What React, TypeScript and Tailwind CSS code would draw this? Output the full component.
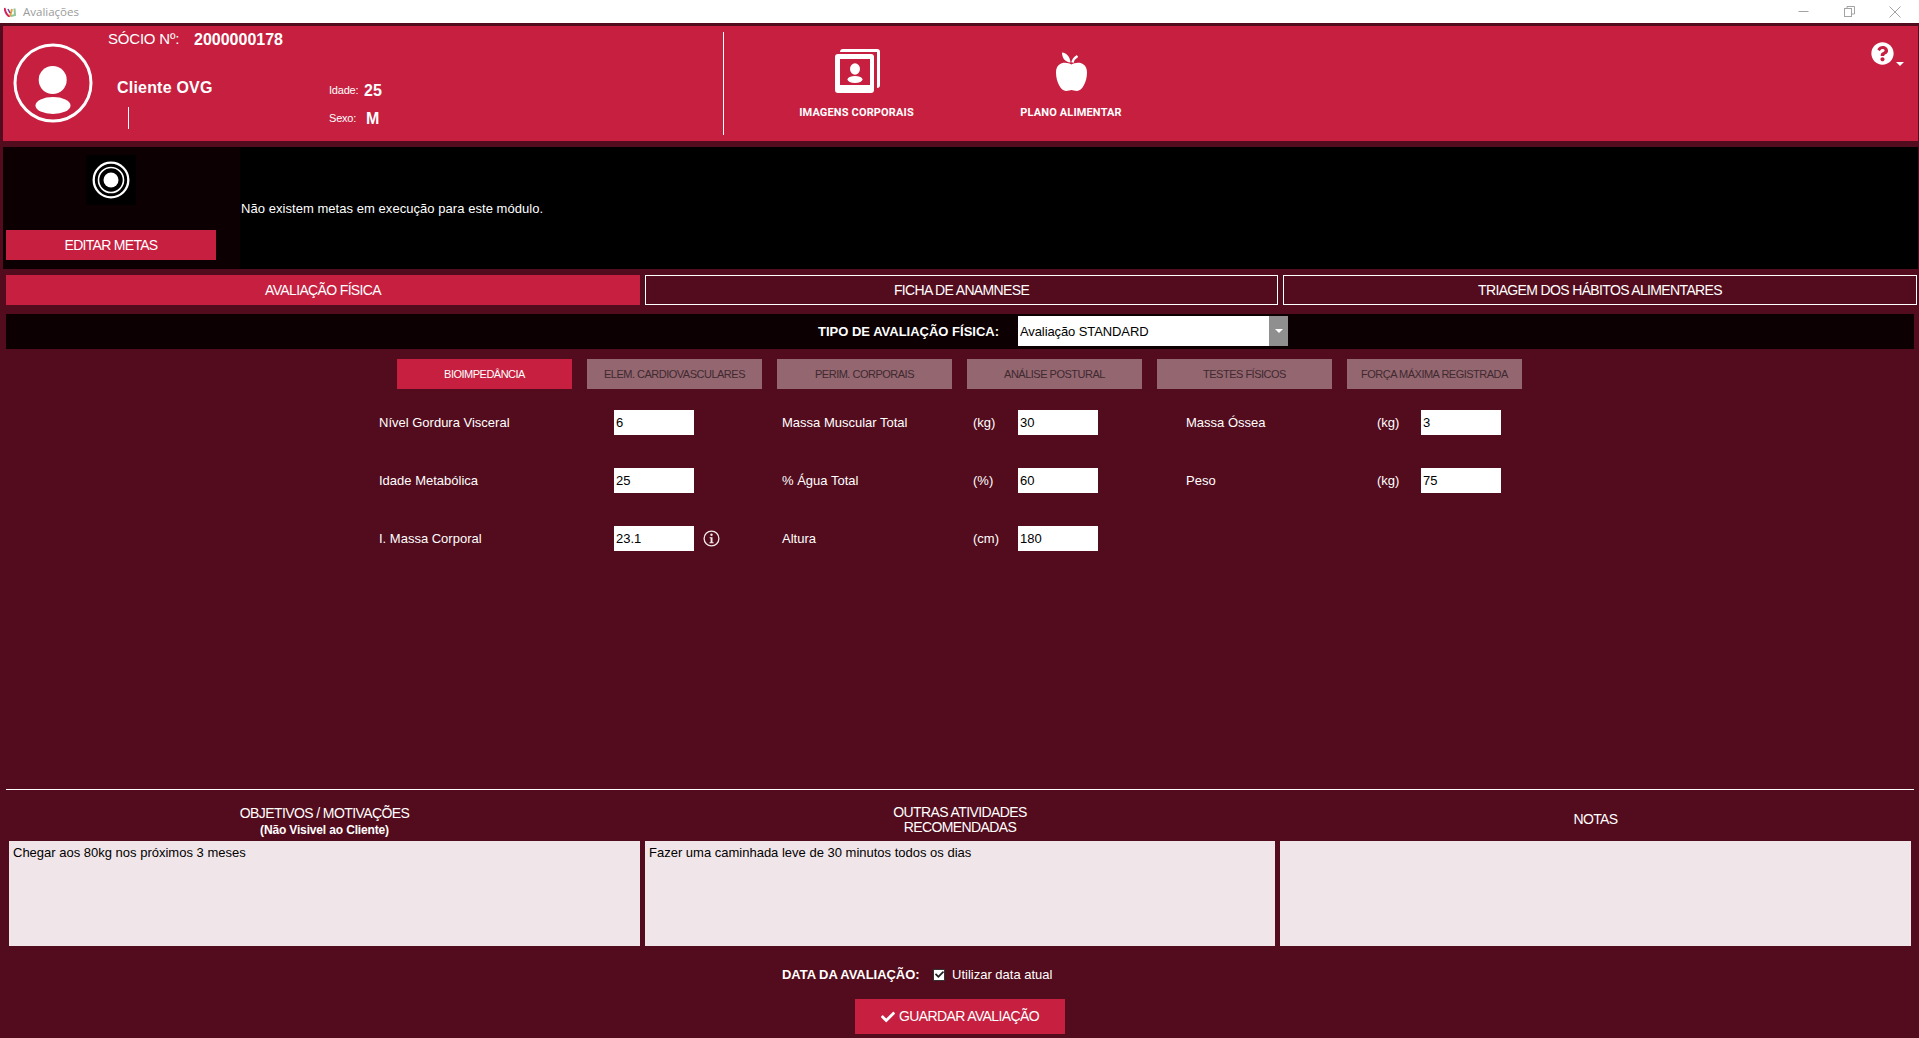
import { FaCheck, FaQuestionCircle } from "react-icons/fa";

const inactive = ["ELEM. CARDIOVASCULARES", "PERIM. CORPORAIS", "ANÁLISE POSTURAL", "TESTES FÍSICOS", "FORÇA MÁXIMA REGISTRADA"];

function Field({ value }: { value: string }) {
  return (
    <input
      readOnly
      value={value}
      className="w-[80px] h-[25px] bg-white text-black text-[13px] pl-[2px] outline-none"
    />
  );
}

function Label({ children }: { children: React.ReactNode }) {
  return <div className="h-[25px] pt-[1px] flex items-center text-[13px] text-white whitespace-nowrap">{children}</div>;
}

function InfoIcon() {
  return (
    <svg width="17" height="17" viewBox="0 0 17 17" className="ml-[9px]">
      <circle cx="8.5" cy="8.5" r="7.4" fill="none" stroke="#f3e9eb" strokeWidth="1.3" />
      <circle cx="8.5" cy="4.7" r="1.2" fill="#f3e9eb" />
      <path d="M6.6 7.2h2.9v5h1.1v1H6.5v-1h1.1V8.2h-1z" fill="#f3e9eb" />
    </svg>
  );
}

function AvatarIcon() {
  return (
    <svg width="80" height="80" viewBox="0 0 80 80">
      <circle cx="40" cy="40" r="38" fill="none" stroke="#fff" strokeWidth="3" />
      <ellipse cx="39.7" cy="37" rx="14" ry="14" fill="#fff" />
      <ellipse cx="40" cy="62.5" rx="17.5" ry="8.5" fill="#fff" />
    </svg>
  );
}

function PhotosIcon() {
  return (
    <svg width="45" height="44" viewBox="0 0 45 44">
      <rect x="5" y="0" width="40" height="39" rx="3" fill="#fff" />
      <rect x="-1" y="3" width="43" height="42" fill="#c61f3f" />
      <rect x="0" y="5" width="39" height="39" rx="3" fill="#fff" />
      <rect x="5" y="10" width="30" height="26" fill="#c61f3f" />
      <ellipse cx="20" cy="20" rx="5" ry="5.7" fill="#fff" />
      <ellipse cx="20" cy="30.5" rx="7.5" ry="3.4" fill="#fff" />
    </svg>
  );
}

function AppleIcon() {
  return (
    <svg width="31" height="39" viewBox="0 0 31 39">
      <path d="M15.5 12.5C11 9.5 0 9 0 20.5 0 30 5 39 10 39c2.5 0 4-1 5.5-1s3 1 5.5 1c5 0 10-9 10-18.5C31 9 20 9.5 15.5 12.5Z" fill="#fff" />
      <path d="M6 .5c5 .5 8 4.5 8.500 10C9 10 6 6 6 .5Z" fill="#fff" />
      <path d="M16.500 10.500C17 8 19 5.500 21.500 4" fill="none" stroke="#fff" strokeWidth="2.500" />
    </svg>
  );
}

function TargetIcon() {
  return (
    <svg width="50" height="50" viewBox="0 0 50 50">
      <circle cx="25" cy="25" r="17.300" fill="none" stroke="#fff" strokeWidth="2.300" />
      <circle cx="25" cy="25" r="12.500" fill="none" stroke="#fff" strokeWidth="1.600" />
      <circle cx="25" cy="25" r="7.500" fill="#fff" />
    </svg>
  );
}

function AppLogo() {
  return (
    <svg width="12" height="10" viewBox="0 0 12 10">
      <path d="M0.500 1 C1.500 6 3.500 9 6 9.500" fill="none" stroke="#d6245c" strokeWidth="2" />
      <path d="M6 9.500 L8 2" fill="none" stroke="#e3a33a" strokeWidth="2" />
      <path d="M7 9 L11 8 L10.500 1.500" fill="none" stroke="#8fc49a" strokeWidth="2" />
      <path d="M4 2 L6 6" fill="none" stroke="#7b3fa0" strokeWidth="1.500" />
    </svg>
  );
}

function WindowControls() {
  return (
    <div className="ml-auto flex items-center pr-[18px]">
      <svg width="11" height="11" viewBox="0 0 11 11"><path d="M0.500 5.500h10" stroke="#a3a3a3" /></svg>
      <svg width="11" height="11" viewBox="0 0 11 11" fill="none" stroke="#a3a3a3" className="ml-[35px]"><rect x="0.500" y="2.500" width="7" height="8" /><path d="M3 2.500V.5h7.500v7.500H7.500" /></svg>
      <svg width="12" height="12" viewBox="0 0 12 12" className="ml-[34px]"><path d="M0.500 .5l11 11M11.500 .5l-11 11" stroke="#a3a3a3" /></svg>
    </div>
  );
}

export default function App() {
  return (
    <div className="w-[1919px] h-[1038px] overflow-hidden bg-[#530c1d] text-white flex flex-col font-['Liberation_Sans',Arial,sans-serif]">
      <div className="h-[23px] bg-white flex items-center shrink-0">
        <div className="ml-[4px] flex items-center"><AppLogo /></div>
        <span className="ml-[7px] text-[11.5px] text-[#9b9b9b] font-['Open_Sans',sans-serif]">Avaliações</span>
        <WindowControls />
      </div>

      <div className="mt-[3px] ml-[3px] mr-[1px] h-[115px] bg-[#c61f3f] flex shrink-0">
        <div className="w-[720px] flex shrink-0">
          <div className="ml-[10px] mt-[17px]"><AvatarIcon /></div>
          <div className="ml-[15px] flex flex-col">
            <div className="h-[26px] pt-[1px] flex items-center">
              <span className="text-[15px] w-[86px] tracking-[-0.2px] whitespace-nowrap">SÓCIO Nº:</span>
              <span className="text-[16px] font-bold">2000000178</span>
            </div>
            <div className="flex">
              <div className="w-[221px]">
                <div className="ml-[9px] mt-[25px] h-[20px] pt-[1px] flex items-center text-[16px] font-bold tracking-[0.2px] whitespace-nowrap">Cliente OVG</div>
                <div className="ml-[20px] mt-[10px] w-px h-[22px] bg-white" />
              </div>
              <div>
                <div className="mt-[28px] h-[20px] pt-[1px] flex items-center">
                  <span className="text-[11px] w-[35px] tracking-[-0.2px]">Idade:</span>
                  <span className="text-[16px] font-bold">25</span>
                </div>
                <div className="mt-[8px] h-[20px] pt-[1px] flex items-center">
                  <span className="text-[11px] w-[37px] tracking-[-0.2px]">Sexo:</span>
                  <span className="text-[16px] font-bold">M</span>
                </div>
              </div>
            </div>
          </div>
        </div>
        <div className="w-px h-[103px] mt-[6px] bg-white shrink-0" />
        <div className="ml-[32px] w-[201px] flex flex-col items-center">
          <div className="mt-[23px] ml-[2px] h-[44px]"><PhotosIcon /></div>
          <div className="mt-[12px] text-[11px] font-bold leading-[16px] tracking-[0.15px] whitespace-nowrap font-['Roboto',sans-serif]">IMAGENS CORPORAIS</div>
        </div>
        <div className="ml-[14px] w-[200px] flex flex-col items-center">
          <div className="mt-[26px] h-[41px]"><AppleIcon /></div>
          <div className="mt-[12px] text-[11px] font-bold leading-[16px] tracking-[0.15px] whitespace-nowrap font-['Roboto',sans-serif]">PLANO ALIMENTAR</div>
        </div>
        <div className="ml-auto mr-[14px] mt-[16px] flex items-end self-start">
          <FaQuestionCircle className="text-white w-[23px] h-[23px]" />
          <div className="ml-[2px] mb-[-1px] w-0 h-0 border-l-[4px] border-r-[4px] border-t-[4px] border-l-transparent border-r-transparent border-t-white" />
        </div>
      </div>

      <div className="mt-[6px] ml-[3px] mr-[1px] h-[122px] bg-black flex shrink-0">
        <div className="w-[237px] bg-[#0c0003] flex flex-col shrink-0">
          <div className="ml-[83px] mt-[8px] w-[50px] h-[50px] bg-black"><TargetIcon /></div>
          <div className="ml-[3px] mt-[25px] w-[210px] h-[30px] bg-[#c61f3f] flex items-center justify-center text-[14px] tracking-[-0.7px]">EDITAR METAS</div>
        </div>
        <div className="flex-1 flex items-center pl-[1px] pt-[2px] text-[13px] tracking-[0.05px]">Não existem metas em execução para este módulo.</div>
      </div>

      <div className="mt-[6px] ml-[6px] h-[30px] grid grid-cols-[634px_633px_634px] gap-[5px] shrink-0 text-[14px] tracking-[-0.65px]">
        <div className="bg-[#c61f3f] flex items-center justify-center">AVALIAÇÃO FÍSICA</div>
        <div className="border border-white flex items-center justify-center">FICHA DE ANAMNESE</div>
        <div className="border border-white flex items-center justify-center">TRIAGEM DOS HÁBITOS ALIMENTARES</div>
      </div>

      <div className="mt-[9px] ml-[6px] mr-[5px] h-[35px] bg-[#0c0003] flex items-start pt-[2px] pl-[812px] shrink-0">
        <div className="h-[30px] pt-[1px] w-[200px] flex items-center text-[13px] font-bold whitespace-nowrap">TIPO DE AVALIAÇÃO FÍSICA:</div>
        <div className="w-[270px] h-[30px] bg-white flex">
          <div className="flex-1 flex items-center pl-[2px] pt-[1px] text-[13px] tracking-[-0.1px] text-black">Avaliação STANDARD</div>
          <div className="w-[19px] bg-[#8f8f8f] flex items-center justify-center">
            <div className="w-0 h-0 border-l-[4px] border-r-[4px] border-t-[4px] border-l-transparent border-r-transparent border-t-white" />
          </div>
        </div>
      </div>

      <div className="mt-[10px] flex justify-center gap-[15px] shrink-0 text-[11px] tracking-[-0.5px]">
        <div className="w-[175px] h-[30px] bg-[#c61f3f] flex items-center justify-center">BIOIMPEDÂNCIA</div>
        {inactive.map((t) => (
          <div key={t} className="w-[175px] h-[30px] bg-[#936670] text-[#40292f] flex items-center justify-center whitespace-nowrap">{t}</div>
        ))}
      </div>

      <div className="mt-[21px] ml-[379px] grid grid-cols-[235px_80px_88px_191px_45px_80px_88px_191px_44px_80px] gap-y-[33px] shrink-0">
        <Label>Nível Gordura Visceral</Label>
        <Field value="6" />
        <div />
        <Label>Massa Muscular Total</Label>
        <Label>(kg)</Label>
        <Field value="30" />
        <div />
        <Label>Massa Óssea</Label>
        <Label>(kg)</Label>
        <Field value="3" />

        <Label>Idade Metabólica</Label>
        <Field value="25" />
        <div />
        <Label>% Água Total</Label>
        <Label>(%)</Label>
        <Field value="60" />
        <div />
        <Label>Peso</Label>
        <Label>(kg)</Label>
        <Field value="75" />

        <Label>I. Massa Corporal</Label>
        <Field value="23.1" />
        <div className="flex items-center h-[25px]"><InfoIcon /></div>
        <Label>Altura</Label>
        <Label>(cm)</Label>
        <Field value="180" />
      </div>

      <div className="mt-[238px] ml-[6px] mr-[5px] h-px bg-white shrink-0" />

      <div className="ml-[9px] flex gap-[5px] shrink-0">
        <div className="w-[631px]">
          <div className="h-[51px] pt-[16px] text-center">
            <div className="text-[14px] leading-[15px] tracking-[-0.6px]">OBJETIVOS / MOTIVAÇÕES</div>
            <div className="text-[12px] font-bold leading-[18px] tracking-[-0.15px]">(Não Visivel ao Cliente)</div>
          </div>
          <textarea readOnly value="Chegar aos 80kg nos próximos 3 meses" className="block w-full h-[105px] bg-[#f0e6e9] text-black text-[13px] pl-[4px] pt-[2px] resize-none outline-none" />
        </div>
        <div className="w-[630px]">
          <div className="h-[51px] pt-[15px] text-center text-[14px] leading-[15px] tracking-[-0.6px]">
            <div>OUTRAS ATIVIDADES</div>
            <div>RECOMENDADAS</div>
          </div>
          <textarea readOnly value="Fazer uma caminhada leve de 30 minutos todos os dias" className="block w-full h-[105px] bg-[#f0e6e9] text-black text-[13px] pl-[4px] pt-[2px] resize-none outline-none" />
        </div>
        <div className="w-[631px]">
          <div className="h-[51px] pt-[22px] text-center text-[14px] leading-[15px] tracking-[-0.6px]">NOTAS</div>
          <textarea readOnly value="" className="block w-full h-[105px] bg-[#f0e6e9] resize-none outline-none" />
        </div>
      </div>

      <div className="mt-[18px] ml-[782px] h-[20px] pt-[1px] flex items-center shrink-0">
        <span className="text-[13px] font-bold w-[151px] whitespace-nowrap tracking-[-0.05px]">DATA DA AVALIAÇÃO:</span>
        <div className="w-[12px] h-[12px] bg-white border border-[#333] flex items-center justify-center">
          <FaCheck className="text-[#222] w-[9px] h-[9px]" />
        </div>
        <span className="ml-[7px] text-[13px]">Utilizar data atual</span>
      </div>

      <div className="mt-[15px] ml-[855px] w-[210px] h-[35px] bg-[#c61f3f] flex items-center justify-center gap-[4px] text-[14px] tracking-[-0.6px] shrink-0">
        <FaCheck className="w-[14px] h-[14px]" />
        <span>GUARDAR AVALIAÇÃO</span>
      </div>
    </div>
  );
}
